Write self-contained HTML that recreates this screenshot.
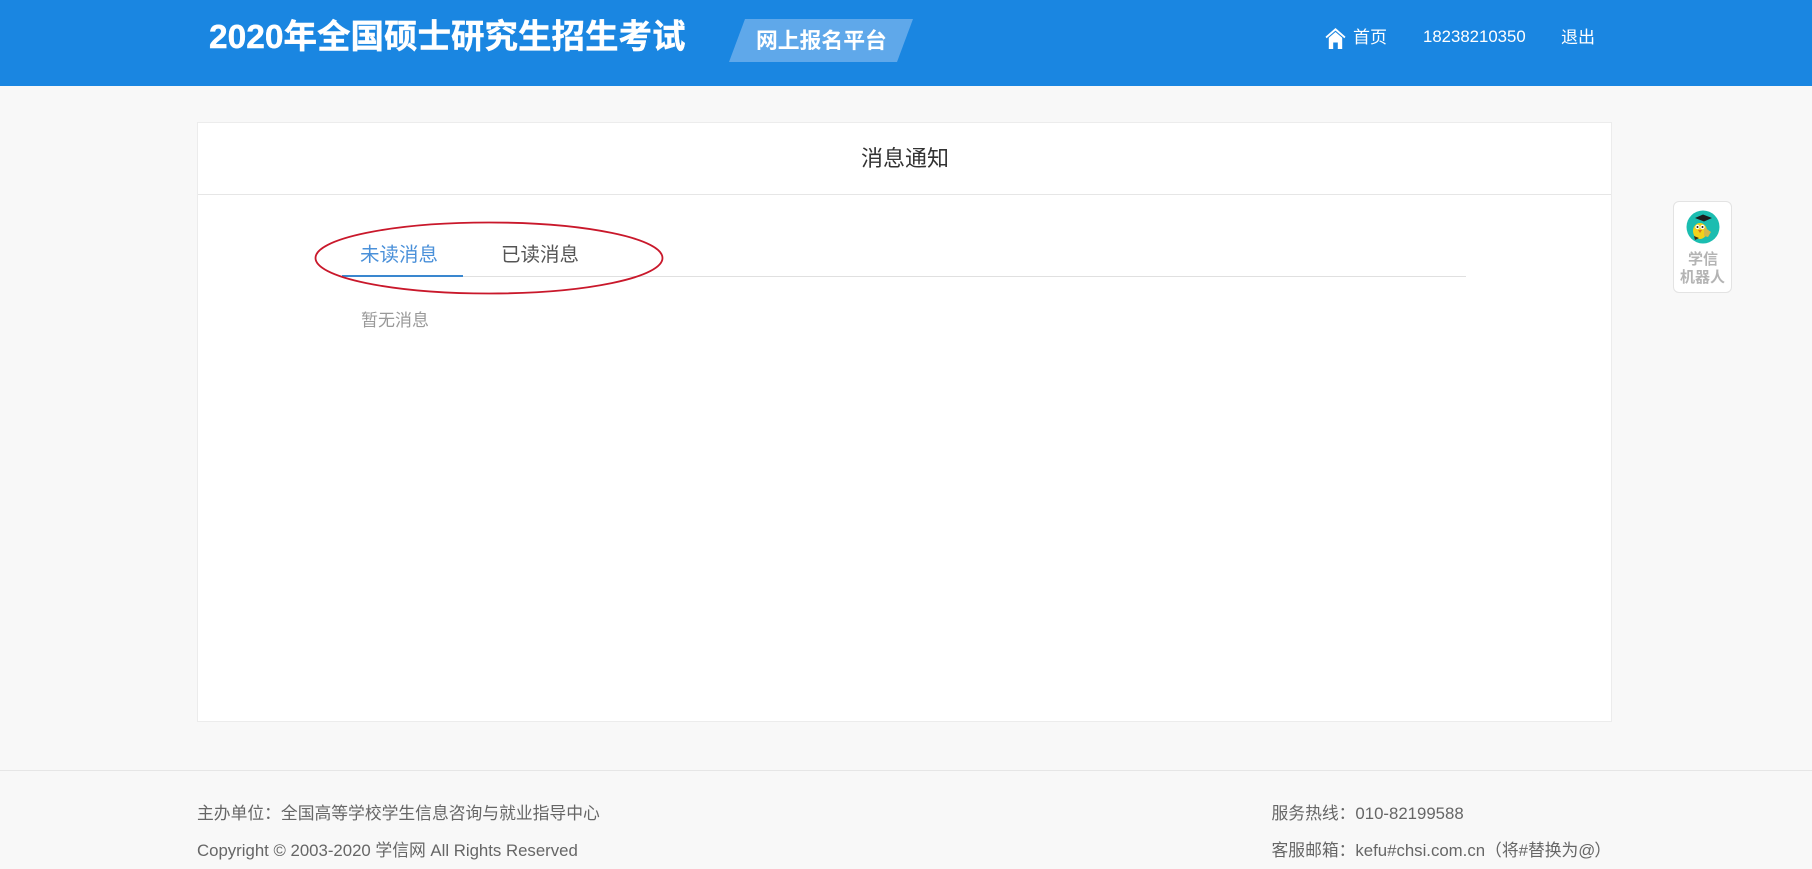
<!DOCTYPE html>
<html lang="zh-CN"><head><meta charset="utf-8"><title>消息通知</title>
<style>
html,body{margin:0;padding:0;width:1812px;height:869px;overflow:hidden;background:#f8f8f8;font-family:"Liberation Sans","Noto Sans CJK SC",sans-serif}
.a{position:absolute;white-space:nowrap;line-height:1}
#hd{position:absolute;left:0;top:0;width:1812px;height:86px;background:#1a86e1}
#card{position:absolute;left:197px;top:122px;width:1415px;height:600px;background:#fff;border:1px solid #ececec;box-sizing:border-box}
</style></head><body>
<div id="hd"></div>
<div class="a" style="left:209px;top:21px;font-size:33.5px;font-weight:700;color:#fff;-webkit-text-stroke:.4px #fff">2020年全国硕士研究生招生考试</div>
<svg class="a" style="left:729px;top:19px" width="184" height="43"><polygon points="16,0 184,0 168,43 0,43" fill="#5fa8ea"/></svg>
<div class="a" style="left:756px;top:30px;font-size:21.8px;font-weight:700;color:#fff">网上报名平台</div>
<svg class="a" style="left:1325px;top:27px" width="21" height="23" viewBox="0 0 21 23"><path d="M10.5 1 L20.5 9.8 L19.4 11.2 L10.5 3.6 L1.6 11.2 L0.5 9.8 Z" fill="#fff"/><path d="M10.5 5 L17.2 10.8 V22 H12.8 V15.5 H8.2 V22 H3.8 V10.8 Z" fill="#fff"/></svg>
<div class="a" style="left:1353px;top:29px;font-size:17px;color:#fff">首页</div>
<div class="a" style="left:1423px;top:29px;font-size:16.8px;color:#fff">18238210350</div>
<div class="a" style="left:1561px;top:29px;font-size:17px;color:#fff">退出</div>
<div id="card"></div>
<div class="a" style="left:198px;top:194px;width:1413px;height:1px;background:#e6e6e6"></div>
<div class="a" style="left:861px;top:148px;font-size:22px;color:#333">消息通知</div>
<div class="a" style="left:342px;top:276px;width:1124px;height:1px;background:#e0e0e0"></div>
<div class="a" style="left:342px;top:275px;width:121px;height:2px;background:#3a87cf"></div>
<div class="a" style="left:360px;top:246px;font-size:19.5px;color:#4a90d9">未读消息</div>
<div class="a" style="left:501px;top:246px;font-size:19.5px;color:#555">已读消息</div>
<div class="a" style="left:361px;top:312px;font-size:17px;color:#999">暂无消息</div>
<svg class="a" style="left:310px;top:218px" width="358" height="80"><ellipse cx="179" cy="40" rx="173.5" ry="35.5" fill="none" stroke="#c9182b" stroke-width="1.8"/></svg>
<div class="a" style="left:1673px;top:201px;width:59px;height:92px;background:#fff;border:1px solid #e3e3e3;border-radius:6px;box-sizing:border-box"></div>
<svg class="a" style="left:1686px;top:210px" width="34" height="34" viewBox="0 0 34 34"><circle cx="17" cy="17" r="16.5" fill="#1bbdb0"/><path d="M9 8 L17 4.5 L26 8 L18 11.5 Z" fill="#1c1c1c"/><ellipse cx="14" cy="21" rx="7" ry="8" fill="#f2d21a"/><path d="M8 26 L13 28 L9 30 Z" fill="#3a2a10"/><path d="M18 17 L25 22 L22 27 L18 26 Z" fill="#d6b84a"/><circle cx="11.5" cy="17" r="2.2" fill="#fff"/><circle cx="16.5" cy="17" r="2.2" fill="#fff"/><circle cx="11.5" cy="17" r="1" fill="#222"/><circle cx="16.5" cy="17" r="1" fill="#222"/><path d="M12 20 L16 20 L14 23 Z" fill="#d9721a"/></svg>
<div class="a" style="left:1688px;top:252px;font-size:15px;font-weight:700;color:#b4b4b4">学信</div>
<div class="a" style="left:1680px;top:270px;font-size:15px;font-weight:700;color:#b4b4b4">机器人</div>
<div class="a" style="left:0;top:770px;width:1812px;height:1px;background:#e6e6e6"></div>
<div class="a" style="left:197px;top:806px;font-size:16.8px;color:#666">主办单位：全国高等学校学生信息咨询与就业指导中心</div>
<div class="a" style="left:197px;top:843px;font-size:16.8px;color:#666">Copyright © 2003-2020 学信网 All Rights Reserved</div>
<div class="a" style="left:1271.5px;top:806px;font-size:16.8px;color:#666">服务热线：010-82199588</div>
<div class="a" style="left:1271.5px;top:843px;font-size:16.8px;color:#666">客服邮箱：kefu#chsi.com.cn（将#替换为@<span style="margin-left:-1px">）</span></div>
</body></html>
